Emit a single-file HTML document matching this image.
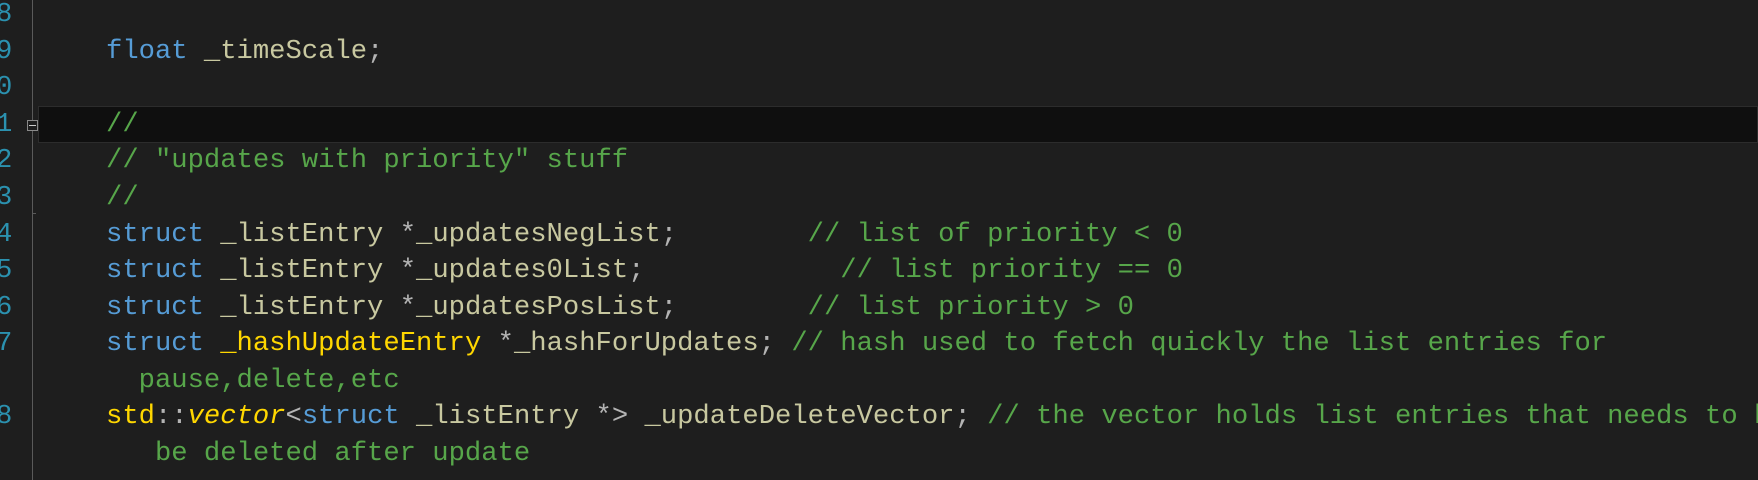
<!DOCTYPE html>
<html><head><meta charset="utf-8"><style>
html,body{margin:0;padding:0;background:#1e1e1e;width:1758px;height:480px;overflow:hidden;position:relative}
.r{position:absolute;left:106px;height:37px;line-height:37px;font-family:"Liberation Mono",monospace;font-size:27.2px;white-space:pre;color:#c8c8a0}
.n{position:absolute;left:-4px;height:37px;line-height:37px;font-family:"Liberation Mono",monospace;font-size:27.2px;color:#2b91af}
.k{color:#569cd6}.c{color:#57a64a}.y{color:#ffd700}.p{color:#b4b4b4}
</style></head><body>
<div style="position:absolute;left:32px;top:0;width:1px;height:480px;background:#5a5a5a"></div>
<div style="position:absolute;left:38px;top:106px;width:1720px;height:37px;background:#0f0f0f;border:1px solid #2c2c2c;box-sizing:border-box"></div>
<div style="position:absolute;left:27px;top:120px;width:11px;height:11px;border:1px solid #8a8a8a;background:#1e1e1e;box-sizing:border-box"></div>
<div style="position:absolute;left:29px;top:125px;width:7px;height:1px;background:#ccc"></div>
<div style="position:absolute;left:32px;top:213px;width:4px;height:1px;background:#5a5a5a"></div>

<div class="n" style="top:-4px">8</div>
<div class="n" style="top:33px">9</div>
<div class="n" style="top:69px">0</div>
<div class="n" style="top:106px">1</div>
<div class="n" style="top:142px">2</div>
<div class="n" style="top:179px">3</div>
<div class="n" style="top:216px">4</div>
<div class="n" style="top:252px">5</div>
<div class="n" style="top:289px">6</div>
<div class="n" style="top:325px">7</div>
<div class="n" style="top:398px">8</div>

<div class="r" style="top:33px"><span class="k">float</span> _timeScale<span class="p">;</span></div>
<div class="r c" style="top:106px">//</div>
<div class="r c" style="top:142px">// "updates with priority" stuff</div>
<div class="r c" style="top:179px">//</div>
<div class="r" style="top:216px"><span class="k">struct</span> _listEntry <span class="p">*</span>_updatesNegList<span class="p">;</span>        <span class="c">// list of priority &lt; 0</span></div>
<div class="r" style="top:252px"><span class="k">struct</span> _listEntry <span class="p">*</span>_updates0List<span class="p">;</span>            <span class="c">// list priority == 0</span></div>
<div class="r" style="top:289px"><span class="k">struct</span> _listEntry <span class="p">*</span>_updatesPosList<span class="p">;</span>        <span class="c">// list priority &gt; 0</span></div>
<div class="r" style="top:325px"><span class="k">struct</span> <span class="y">_hashUpdateEntry</span> <span class="p">*</span>_hashForUpdates<span class="p">;</span> <span class="c">// hash used to fetch quickly the list entries for</span></div>
<div class="r c" style="top:362px">  pause,delete,etc</div>
<div class="r" style="top:398px"><span class="y">std</span><span class="p">::</span><span class="y" style="font-style:italic">vector</span><span class="p">&lt;</span><span class="k">struct</span> _listEntry <span class="p">*&gt;</span> _updateDeleteVector<span class="p">;</span> <span class="c">// the vector holds list entries that needs to be</span></div>
<div class="r c" style="top:435px">   be deleted after update</div>
</body></html>
